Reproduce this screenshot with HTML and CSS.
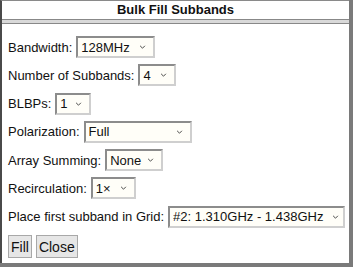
FILE: index.html
```html
<!DOCTYPE html>
<html lang="en">
<head>
    <meta charset="UTF-8">
    <title>Bulk Fill Subbands</title>
    <link rel="stylesheet" href="styles.css">
</head>
<body>
    <div class="dialog">
        <header class="dialog-title">Bulk Fill Subbands</header>
        <div class="title-bar"></div>

        <form class="fill-form">
            <div class="row">
                <label>Bandwidth:</label>
                <span class="select-wrap w-bandwidth">
                    <select><option>128MHz</option></select>
                    <svg class="chevron" viewBox="0 0 8 5"><path d="M1 1l3 3 3-3"/></svg>
                </span>
            </div>
            <div class="row">
                <label>Number of Subbands:</label>
                <span class="select-wrap w-subbands">
                    <select><option>4</option></select>
                    <svg class="chevron" viewBox="0 0 8 5"><path d="M1 1l3 3 3-3"/></svg>
                </span>
            </div>
            <div class="row">
                <label>BLBPs:</label>
                <span class="select-wrap w-blbps">
                    <select><option>1</option></select>
                    <svg class="chevron" viewBox="0 0 8 5"><path d="M1 1l3 3 3-3"/></svg>
                </span>
            </div>
            <div class="row">
                <label>Polarization:</label>
                <span class="select-wrap w-polar">
                    <select><option>Full</option></select>
                    <svg class="chevron" viewBox="0 0 8 5"><path d="M1 1l3 3 3-3"/></svg>
                </span>
            </div>
            <div class="row">
                <label>Array Summing:</label>
                <span class="select-wrap w-summing">
                    <select><option>None</option></select>
                    <svg class="chevron" viewBox="0 0 8 5"><path d="M1 1l3 3 3-3"/></svg>
                </span>
            </div>
            <div class="row">
                <label>Recirculation:</label>
                <span class="select-wrap w-recirc">
                    <select><option>1×</option></select>
                    <svg class="chevron" viewBox="0 0 8 5"><path d="M1 1l3 3 3-3"/></svg>
                </span>
            </div>
            <div class="row">
                <label>Place first subband in Grid:</label>
                <span class="select-wrap w-grid">
                    <select><option>#2: 1.310GHz - 1.438GHz</option></select>
                    <svg class="chevron" viewBox="0 0 8 5"><path d="M1 1l3 3 3-3"/></svg>
                </span>
            </div>
            <div class="row buttons">
                <button type="button">Fill</button>
                <button type="button">Close</button>
            </div>
        </form>
    </div>
</body>
</html>
```

FILE: styles.css
```css
* {
    margin: 0;
    padding: 0;
    box-sizing: border-box;
}

body {
    font-family: "Liberation Sans", Arial, sans-serif;
    font-size: 13px;
    color: #111;
    background-color: #7a7a7a;
}

/* 对话框 */
.dialog {
    width: 349px;
    height: 263px;
    background-color: #fff;
    border-left: 2px solid #4a4a4a;
    border-top: 1px solid #8a8a8a;
}

.dialog-title {
    height: 18px;
    line-height: 18px;
    text-align: center;
    font-weight: bold;
    font-size: 13px;
}

.title-bar {
    height: 5px;
    background-color: #d9d9d9;
    border-top: 1px solid #888;
    border-bottom: 1px solid #888;
}

/* 表单 */
.fill-form {
    display: flex;
    flex-direction: column;
    gap: 6.3px;
    padding: 12px 0 0 6px;
}

.row {
    display: flex;
    align-items: center;
    gap: 4px;
    height: 22px;
}

.select-wrap {
    position: relative;
    display: inline-block;
    height: 22px;
}

.select-wrap select {
    -webkit-appearance: none;
    appearance: none;
    width: 100%;
    height: 22px;
    padding: 0 0 0 3px;
    font-family: inherit;
    font-size: 13px;
    color: #111;
    background-color: #fffef8;
    border: 2px solid #8c8c8c;
    border-right-color: #cfcfcf;
    border-bottom-color: #cfcfcf;
    border-radius: 0;
    outline: none;
}

.chevron {
    position: absolute;
    right: 9px;
    top: 9px;
    width: 7px;
    height: 4px;
    fill: none;
    stroke: #333;
    stroke-width: 1.1;
}

.w-bandwidth { width: 79px; }
.w-subbands { width: 38px; }
.w-blbps { width: 36px; }
.w-polar { width: 108px; }
.w-summing { width: 58px; }
.w-recirc { width: 45px; }
.w-grid { width: 177px; }

.w-grid .chevron {
    right: 6px;
}

/* 按钮 */
.buttons {
    height: 23px;
    margin-top: 1px;
}

.buttons button {
    height: 23px;
    padding: 0 2px;
    font-family: inherit;
    font-size: 14px;
    color: #111;
    background-color: #e6e6e6;
    border: 1px solid #a8a8a8;
    border-radius: 0;
}
```
